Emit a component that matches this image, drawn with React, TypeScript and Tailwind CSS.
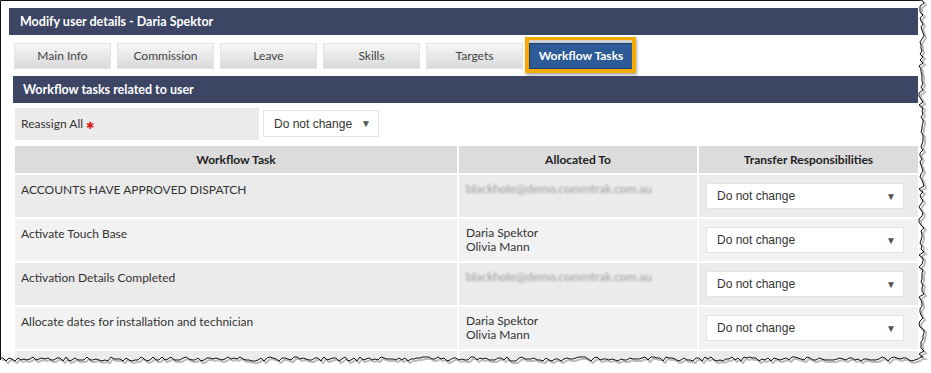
import React from "react";

const tabs = ["Main Info", "Commission", "Leave", "Skills", "Targets"];

type Row = { task: string; email?: boolean; names?: string[] };

const rows: Row[] = [
  { task: "ACCOUNTS HAVE APPROVED DISPATCH", email: true },
  { task: "Activate Touch Base", names: ["Daria Spektor", "Olivia Mann"] },
  { task: "Activation Details Completed", email: true },
  { task: "Allocate dates for installation and technician", names: ["Daria Spektor", "Olivia Mann"] },
  { task: "Check Accounts On Hold part 2 JAN Next", email: true },
];

function Select({ className = "" }: { className?: string }) {
  return (
    <div
      className={`flex items-center justify-between bg-white border border-[#e2e2e2] font-['Liberation_Sans',Arial,sans-serif] text-[12px] text-[#333] ${className}`}
    >
      <span>Do not change</span>
      <span className="text-[10px] text-[#555]">▼</span>
    </div>
  );
}

// torn paper edge for the screenshot frame
function seeded(seed: number) {
  let s = seed;
  return () => {
    s = (s * 9301 + 49297) % 233280;
    return s / 233280;
  };
}

function TornFrame() {
  const rnd = seeded(11);
  const right: [number, number][] = [];
  for (let y = 0; y <= 357; y += 3) right.push([919 + Math.round(rnd() * 5), y]);
  const bottom: [number, number][] = [];
  for (let x = 921; x >= 0; x -= 3) bottom.push([x, 357 + Math.round(rnd() * 4)]);
  const edge = [...right, ...bottom];
  const pts = (p: [number, number][]) => p.map(([x, y]) => `${x},${y}`).join(" ");
  const outside = pts([...edge, [0, 373], [931, 373], [931, 0]]);
  const shadow = pts(edge.map(([x, y]) => [x + 2, y + 2] as [number, number]));
  return (
    <svg className="absolute inset-0 pointer-events-none" width="931" height="373" viewBox="0 0 931 373">
      <polygon points={outside} fill="#fff" />
      <polyline points={shadow} fill="none" stroke="#bbb" strokeWidth="2" />
      <polyline points={pts([[0.5, 360], [0.5, 0.5], [919, 0.5], ...edge])} fill="none" stroke="#111" strokeWidth="1" />
    </svg>
  );
}

export default function App() {
  return (
    <div className="relative w-[931px] h-[373px] overflow-hidden bg-white font-['Lato','Noto_Sans',sans-serif]">
      <div className="pl-[9px] pt-[8px] w-[918px]">
        {/* Title bar */}
        <div className="h-[27px] bg-[#3c4664] pl-[11px] text-[12.5px] font-bold leading-[27px] text-white">
          Modify user details - Daria Spektor
        </div>

        {/* Tabs */}
        <div className="flex gap-[6px] pl-[5px] pt-[8px] pb-[7px]">
          {tabs.map((t) => (
            <div
              key={t}
              className="flex h-[26px] w-[97px] items-center justify-center border border-[#e3e3e3] bg-gradient-to-b from-[#f7f7f7] to-[#d9d9d9] text-[12px] text-[#444]"
            >
              {t}
            </div>
          ))}
          <div className="relative flex h-[26px] w-[104px] items-center justify-center border border-[#1d3e6b] bg-[#2c5b98] text-[12px] font-bold text-white">
            Workflow Tasks
            <span className="absolute left-[-5px] right-[-4px] top-[-7px] bottom-[-5px] border-4 border-[#f6ab00] shadow-[1px_2px_3px_rgba(0,0,0,0.35)]" />
            <span className="absolute left-[-1px] right-0 top-[-4px] h-[3px] bg-[#d0d0d0]" />
          </div>
        </div>

        {/* Section bar */}
        <div className="ml-[4px] h-[27px] bg-[#3c4664] pl-[10px] text-[12.5px] font-bold leading-[27px] text-white">
          Workflow tasks related to user
        </div>

        {/* Reassign all */}
        <div className="ml-[6px] mt-[5px] flex items-start">
          <div className="flex h-[32px] w-[244px] items-center bg-[#ebebeb] pl-[6px] text-[12px] text-[#333]">
            Reassign All
            <span className="ml-[3px] mt-[3px] text-[10px] text-[#e02020]">✱</span>
          </div>
          <Select className="ml-[4px] mt-[2px] h-[27px] w-[116px] pl-[10px] pr-[7px]" />
        </div>

        {/* Table */}
        <div className="ml-[6px] mt-[6px] grid grid-cols-[442px_238px_219px] gap-x-[2px] gap-y-[2px] text-[12px] text-[#333]">
          {["Workflow Task", "Allocated To", "Transfer Responsibilities"].map((h) => (
            <div key={h} className="h-[27px] bg-[#dcdcdc] text-center font-bold leading-[27px] text-[#222]">
              {h}
            </div>
          ))}
          {rows.map((r, i) => {
            const bg = i % 2 === 0 ? "bg-[#ebebeb]" : "bg-[#f2f2f2]";
            return (
              <React.Fragment key={r.task}>
                <div className={`h-[42px] ${bg} pl-[6px] pt-[7px] leading-[15px]`}>{r.task}</div>
                <div className={`h-[42px] ${bg} pl-[7px] pt-[7px] leading-[14px]`}>
                  {r.email ? (
                    <span className="text-[12px] text-[#999] blur-[1.2px]">blackhole@demo.commtrak.com.au</span>
                  ) : (
                    r.names!.map((n) => <div key={n}>{n}</div>)
                  )}
                </div>
                <div className={`h-[42px] ${bg} pl-[7px] pt-[8px]`}>
                  <Select className="h-[26px] w-[198px] pl-[10px] pr-[7px]" />
                </div>
              </React.Fragment>
            );
          })}
        </div>
      </div>
      <TornFrame />
    </div>
  );
}
